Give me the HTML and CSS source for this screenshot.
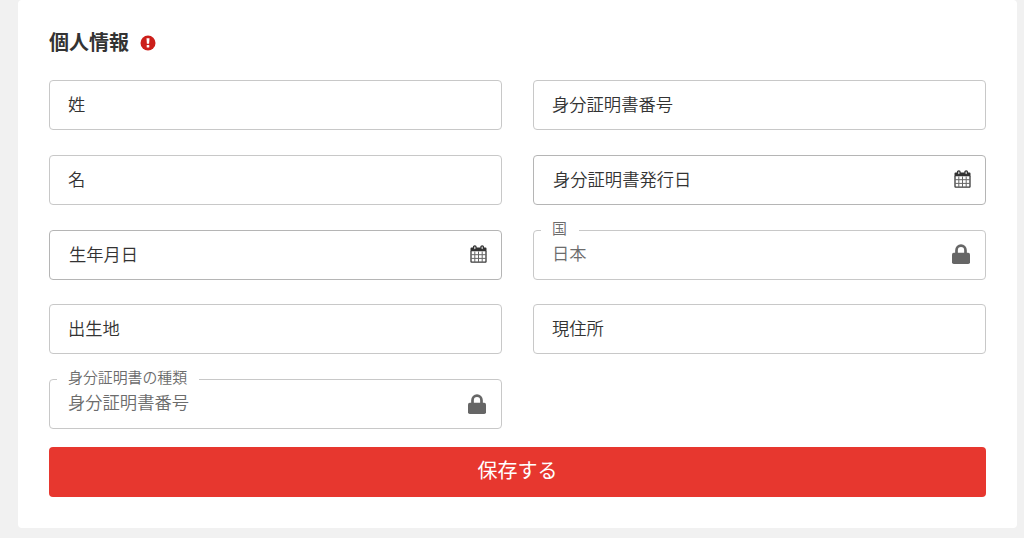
FILE: index.html
```html
<!DOCTYPE html>
<html lang="ja">

<head>
    <meta charset="UTF-8">
    <meta name="viewport" content="width=device-width, initial-scale=1.0">
    <title>個人情報</title>
    <link rel="stylesheet" href="styles.css">
</head>

<body>

    <!-- アイコン定義 -->
    <svg class="sprite" width="0" height="0">
        <symbol id="calendar" viewBox="0 0 17 18">
            <path d="M1.500 2.500h14a1 1 0 0 1 1 1v2.700H.5V3.500a1 1 0 0 1 1-1z" fill="#333" />
            <path d="M1 6v10.500a.6.6 0 0 0 .6.6h13.800a.6.6 0 0 0 .6-.6V6" fill="none" stroke="#3c3c3c" stroke-width="1.300" />
            <path d="M4.800 6.500v10.500M8.500 6.500v10.500M12.200 6.500v10.500M1 9.700h15M1 13.400h15" fill="none" stroke="#666" stroke-width="1" />
            <rect x="3.500" y=".8" width="2.600" height="4" rx="1.300" fill="#ccc" stroke="#333" stroke-width="1.200" />
            <rect x="10.900" y=".8" width="2.600" height="4" rx="1.300" fill="#ccc" stroke="#333" stroke-width="1.200" />
        </symbol>
        <symbol id="lock" viewBox="0 0 18 20">
            <path d="M4.500 10V6.200a4.500 4.500 0 0 1 9 0V10" fill="none" stroke="#666" stroke-width="2.700" />
            <rect x="0" y="8.700" width="18" height="11.300" rx="1.800" fill="#666" />
        </symbol>
    </svg>

    <form class="card">
        <h2>
            個人情報
            <svg class="alert" viewBox="0 0 16 16">
                <circle cx="8" cy="8" r="7.500" fill="#cc1f1a" />
                <path d="M6.500 3.300h3l-.4 5.500H6.900z" fill="#fff" />
                <rect x="6.700" y="10" width="2.600" height="2.500" rx=".6" fill="#fff" />
            </svg>
        </h2>

        <div class="fields">
            <div class="field"><span>姓</span></div>
            <div class="field"><span>身分証明書番号</span></div>
            <div class="field"><span>名</span></div>
            <div class="field date">
                <span>身分証明書発行日</span>
                <svg class="calendar"><use href="#calendar" /></svg>
            </div>
            <div class="field date">
                <span>生年月日</span>
                <svg class="calendar"><use href="#calendar" /></svg>
            </div>
            <div class="field locked">
                <label>国</label>
                <span>日本</span>
                <svg class="lock"><use href="#lock" /></svg>
            </div>
            <div class="field"><span>出生地</span></div>
            <div class="field"><span>現住所</span></div>
            <div class="field locked">
                <label>身分証明書の種類</label>
                <span>身分証明書番号</span>
                <svg class="lock"><use href="#lock" /></svg>
            </div>
        </div>

        <button type="button">保存する</button>
    </form>

</body>

</html>
```
FILE: styles.css
```css
* {
    box-sizing: border-box;
}

body {
    margin: 0;
    height: 538px;
    overflow: hidden;
    background-color: #f1f1f1;
    color: #333;
    font-family: 'Noto Sans CJK JP', sans-serif;
    font-weight: 350;
}

.sprite {
    position: absolute;
}

.card {
    width: 999px;
    height: 528px;
    margin-left: 18px;
    padding: 28px 31px 0 31px;
    background-color: #fff;
    border-radius: 4px;
}

h2 {
    display: flex;
    align-items: center;
    gap: 11px;
    height: 28px;
    margin: 0 0 24px;
    font-size: 20px;
    line-height: 28px;
    font-weight: bold;
    color: #333;
}

.alert {
    width: 16px;
    height: 16px;
    margin-top: 2px;
}

.fields {
    display: grid;
    grid-template-columns: 453px 453px;
    grid-auto-rows: 50px;
    gap: 24.8px 31px;
}

.field {
    position: relative;
    display: flex;
    align-items: center;
    justify-content: space-between;
    padding: 0 14px 2px 18px;
    border: 1px solid #c8c8c8;
    border-radius: 4px;
    font-size: 17.300px;
    line-height: 24px;
}

.date {
    padding-left: 19px;
    border-color: #b5b5b5;
}

.locked {
    padding-right: 15px;
    padding-bottom: 4px;
    color: #6c6c6c;
}

/* 枠線の上に重なるラベル */
.locked label {
    position: absolute;
    top: -13px;
    left: 7px;
    padding: 0 12px 0 11px;
    background-color: #fff;
    font-size: 14.900px;
    line-height: 20px;
}

.calendar {
    width: 17px;
    height: 18px;
}

.lock {
    width: 18px;
    height: 20px;
    margin-top: 3px;
}

button {
    display: block;
    width: 937px;
    height: 50px;
    margin-top: 18px;
    padding: 0 0 6px;
    background-color: #e7372f;
    color: #fff;
    border: none;
    border-radius: 4px;
    font-family: inherit;
    font-size: 20px;
    cursor: pointer;
}
```
